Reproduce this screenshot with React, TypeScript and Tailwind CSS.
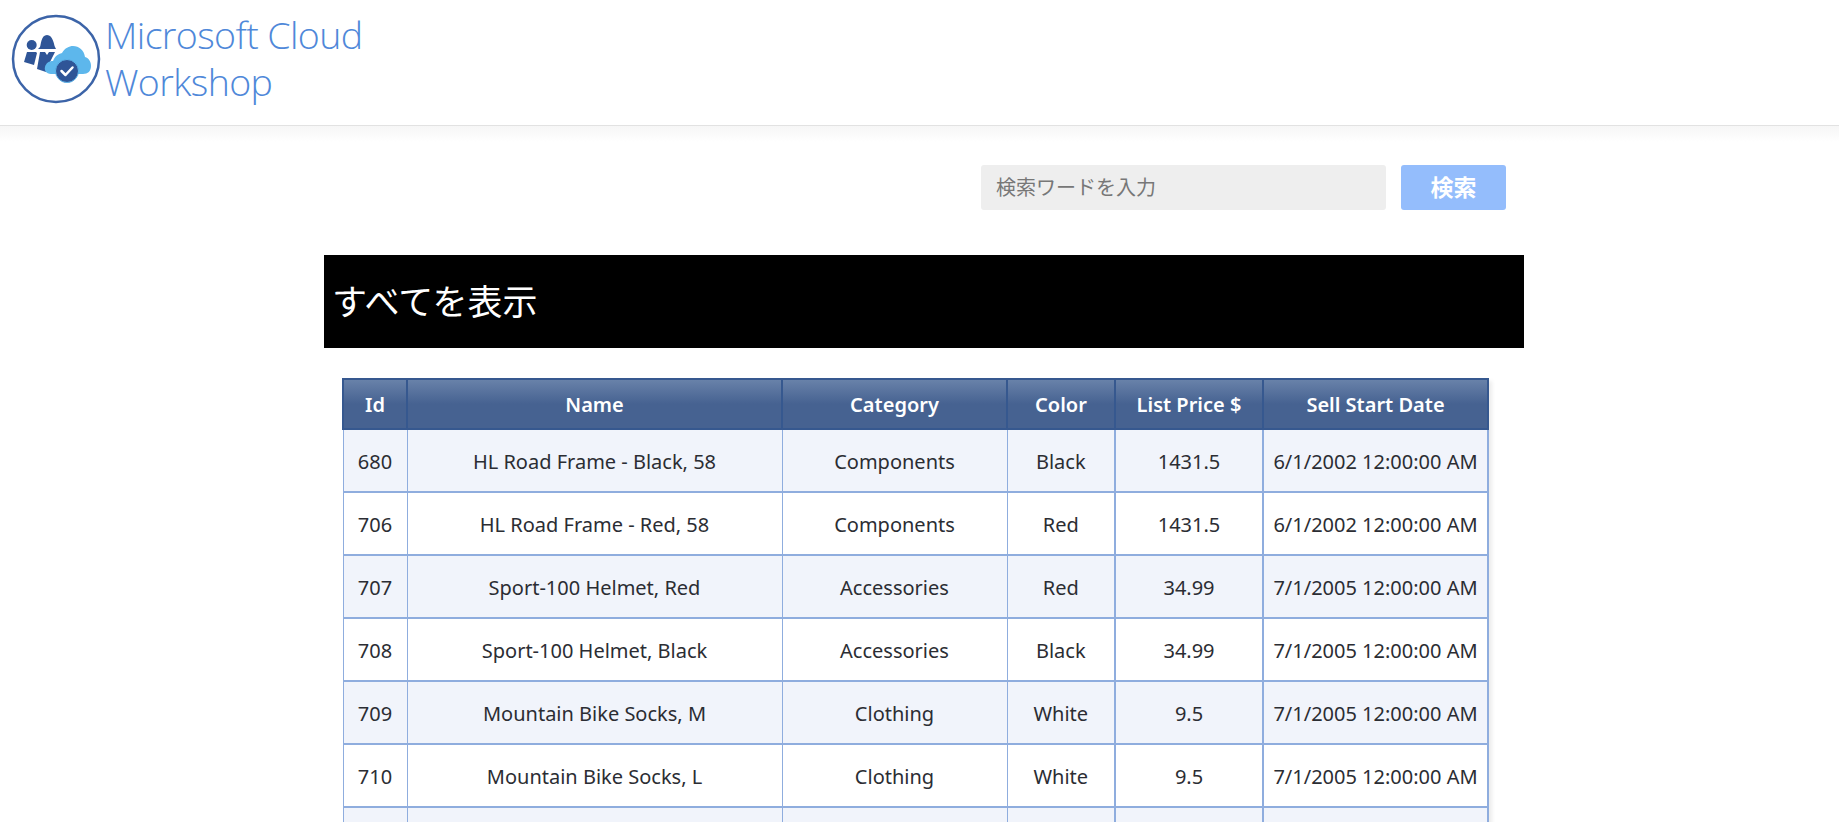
import React from 'react';

const rows = [
  { id: 680, name: 'HL Road Frame - Black, 58', category: 'Components', color: 'Black', price: '1431.5', date: '6/1/2002 12:00:00 AM' },
  { id: 706, name: 'HL Road Frame - Red, 58', category: 'Components', color: 'Red', price: '1431.5', date: '6/1/2002 12:00:00 AM' },
  { id: 707, name: 'Sport-100 Helmet, Red', category: 'Accessories', color: 'Red', price: '34.99', date: '7/1/2005 12:00:00 AM' },
  { id: 708, name: 'Sport-100 Helmet, Black', category: 'Accessories', color: 'Black', price: '34.99', date: '7/1/2005 12:00:00 AM' },
  { id: 709, name: 'Mountain Bike Socks, M', category: 'Clothing', color: 'White', price: '9.5', date: '7/1/2005 12:00:00 AM' },
  { id: 710, name: 'Mountain Bike Socks, L', category: 'Clothing', color: 'White', price: '9.5', date: '7/1/2005 12:00:00 AM' },
];

const headers = ['Id', 'Name', 'Category', 'Color', 'List Price $', 'Sell Start Date'];

const Logo = () => (
  <svg width="92" height="92" viewBox="0 0 92 92" className="shrink-0">
    <circle cx="45" cy="45" r="43" fill="#fff" stroke="#3c64a8" strokeWidth="2.5" />
    {/* people */}
    <circle cx="20.700" cy="31" r="5" fill="#2f5597" />
    <path d="M16 38h9l1 1-3 12-10-3z" fill="#2f5597" />
    <path d="M29 33c1-2 1-12 7-12s7 10 8 12l1 2H27z" fill="#2f5597" />
    <path d="M29 38h5l2 3 2-3h6l-5 10-2 2-2 8-9-3z" fill="#2f5597" />
    {/* cloud */}
    <path d="M40 60C35 60 33 56 34 53C35 49 38 47 42 47C44 42 47 40 51 39C54 34 58 32 62 32C68 32 73 36 74 43C78 44 80 48 80 52C80 57 77 60 72 60Z" fill="#5db7ec" />
    <circle cx="56" cy="57" r="11.500" fill="#2f5597" stroke="#5db7ec" strokeWidth="1" />
    <path d="M50.500 57l4 4 7-7.500" fill="none" stroke="#fff" strokeWidth="2.500" strokeLinecap="round" strokeLinejoin="round" />
  </svg>
);

export default function App() {
  return (
    <div className="h-[822px] overflow-hidden bg-white text-[#2b2d33] font-['Noto_Sans','Noto_Sans_CJK_JP',sans-serif]">
      <header className="h-[126px] border-b border-[#e2e2e2] flex items-center pl-[11px] pb-[5px]">
        <Logo />
        <div className="ml-[2px] -mt-[5px] text-[37.5px] leading-[47px] font-light text-[#4f88d9] font-['Open_Sans',sans-serif] tracking-[-0.6px]">
          Microsoft Cloud
          <br />
          Workshop
        </div>
      </header>
      <div className="h-[16px] bg-gradient-to-b from-[#f6f6f6] to-white" />

      <div className="w-[1200px] ml-[324px]">
        <div className="flex justify-end gap-[15px] pt-[23px] pr-[18px]">
          <div className="w-[405px] h-[45px] bg-[#eeeeee] rounded-[3px] flex items-center pl-[15px] text-[20px] text-[#777777]">
            検索ワードを入力
          </div>
          <button className="w-[105px] h-[45px] bg-[#94bdfc] rounded-[3px] text-white text-[23px] font-bold">
            検索
          </button>
        </div>

        <h1 className="mt-[45px] h-[93px] bg-black text-white text-[35px] flex items-center pl-[8px] pt-[2px] font-normal">
          すべてを表示
        </h1>

        <table className="mt-[30px] ml-[18px] w-[1145px] table-fixed border-collapse text-[20px] text-center shadow-[3px_3px_4px_rgba(0,0,0,0.08)]">
          <colgroup>
            <col className="w-[64px]" />
            <col className="w-[375px]" />
            <col className="w-[225px]" />
            <col className="w-[108px]" />
            <col className="w-[148px]" />
            <col className="w-[225px]" />
          </colgroup>
          <thead>
            <tr className="h-[50px] bg-gradient-to-b from-[#6a83aa] via-[#466291] via-50% to-[#466291]">
              {headers.map(h => (
                <th key={h} className="border-2 border-[#36588f] font-semibold text-white p-0 pt-[2px]">
                  {h}
                </th>
              ))}
            </tr>
          </thead>
          <tbody>
            {rows.map((r, i) => (
              <tr key={r.id} className={i % 2 === 0 ? 'h-[63px] bg-[#f1f4fb]' : 'h-[63px] bg-white'}>
                <td className="border-y-2 border-x border-[#8fadde] p-0 pt-[2px]">{r.id}</td>
                <td className="border-y-2 border-x border-[#8fadde] p-0 pt-[2px]">{r.name}</td>
                <td className="border-y-2 border-x border-[#8fadde] p-0 pt-[2px]">{r.category}</td>
                <td className="border-y-2 border-x border-[#8fadde] p-0 pt-[2px]">{r.color}</td>
                <td className="border-y-2 border-l-2 border-r border-[#8fadde] p-0 pt-[2px]">{r.price}</td>
                <td className="border-y-2 border-x-2 border-[#8fadde] p-0 pt-[2px]">{r.date}</td>
              </tr>
            ))}
            {/* next row starts right at the fold, its text is below the window */}
            <tr className="h-[63px] bg-[#f1f4fb]">
              <td className="border-y-2 border-x border-[#8fadde] p-0" />
              <td className="border-y-2 border-x border-[#8fadde] p-0" />
              <td className="border-y-2 border-x border-[#8fadde] p-0" />
              <td className="border-y-2 border-x border-[#8fadde] p-0" />
              <td className="border-y-2 border-l-2 border-r border-[#8fadde] p-0" />
              <td className="border-y-2 border-x-2 border-[#8fadde] p-0" />
            </tr>
          </tbody>
        </table>
      </div>
    </div>
  );
}
